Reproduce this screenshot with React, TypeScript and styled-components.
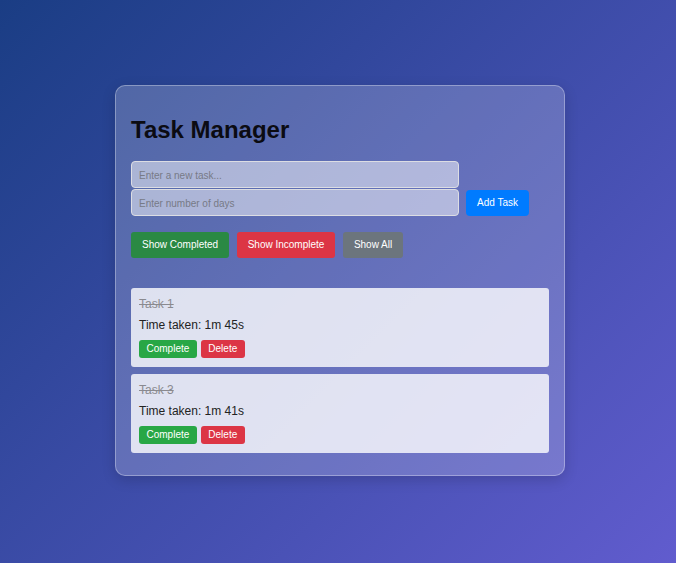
import React from "react";
import styled, { createGlobalStyle } from "styled-components";

const GlobalStyle = createGlobalStyle`
  html, body { margin: 0; padding: 0; }
  body {
    font-family: "Liberation Sans", Arial, sans-serif;
    min-height: 100vh;
    background: linear-gradient(135deg, #1a3d84 0%, #615cce 100%);
    background-attachment: fixed;
  }
  * { box-sizing: border-box; }
`;

const Page = styled.div`
  min-height: 563px;
  display: flex;
  justify-content: center;
  align-items: flex-start;
  padding: 85px 0 0 4px;
`;

const Card = styled.div`
  width: 450px;
  padding: 30px 15px 22px;
  border: 1px solid rgba(255, 255, 255, 0.32);
  border-radius: 10px;
  background: rgba(255, 255, 255, 0.2);
  box-shadow: 0 4px 14px rgba(0, 0, 0, 0.16);
`;

const Title = styled.h2`
  margin: 0 0 17px;
  font-size: 24px;
  line-height: 28px;
  font-weight: bold;
  color: #0b0b12;
`;

const Form = styled.div`
  display: flex;
  align-items: flex-end;
  gap: 7px;
`;

const Inputs = styled.div`
  display: flex;
  flex-direction: column;
  gap: 1px;
  width: 328px;
`;

const Input = styled.input`
  height: 27px;
  width: 100%;
  padding: 2px 7px 0;
  border: 1px solid #dcdde3;
  border-radius: 4px;
  background: rgba(255, 255, 255, 0.5);
  font-family: "Liberation Sans", Arial, sans-serif;
  font-size: 10px;
  color: #222;
  outline: none;
  &::placeholder { color: #777a86; }
`;

const colors: Record<string, string> = {
  blue: "#007bff",
  green: "#2a8944",
  brightGreen: "#28a745",
  red: "#dc3545",
  gray: "#6c757d",
};

const Button = styled.button<{ $tone: string }>`
  height: 26px;
  padding: 0 11px;
  border: none;
  border-radius: 3px;
  background: ${(p) => colors[p.$tone]};
  color: #fff;
  font-family: "Liberation Sans", Arial, sans-serif;
  font-size: 10px;
  line-height: 26px;
  white-space: nowrap;
  cursor: pointer;
`;

const AddButton = styled(Button)`
  border-radius: 4px;
`;

const Filters = styled.div`
  display: flex;
  gap: 7.5px;
  margin-top: 16px;
`;

const TaskList = styled.div`
  display: flex;
  flex-direction: column;
  gap: 7px;
  margin-top: 30px;
`;

const TaskItem = styled.div`
  padding: 9px 8px;
  border-radius: 3px;
  background: rgba(255, 255, 255, 0.8);
`;

const TaskName = styled.div<{ $done: boolean }>`
  font-size: 12px;
  line-height: 14px;
  color: ${(p) => (p.$done ? "#8a8a8f" : "#222")};
  text-decoration: ${(p) => (p.$done ? "line-through" : "none")};
  margin-bottom: 7px;
`;

const TimeText = styled.div`
  font-size: 12px;
  line-height: 14px;
  color: #222;
  margin-bottom: 8px;
`;

const Actions = styled.div`
  display: flex;
  gap: 4px;
`;

const SmallButton = styled(Button)`
  height: 18px;
  line-height: 18px;
  padding: 0 7.5px;
`;

const tasks = [
  { id: 1, name: "Task 1", time: "1m 45s", done: true },
  { id: 3, name: "Task 3", time: "1m 41s", done: true },
];

export default function App() {
  return (
    <>
      <GlobalStyle />
      <Page>
        <Card>
          <Title>Task Manager</Title>
          <Form>
            <Inputs>
              <Input placeholder="Enter a new task..." />
              <Input placeholder="Enter number of days" />
            </Inputs>
            <AddButton $tone="blue">Add Task</AddButton>
          </Form>
          <Filters>
            <Button $tone="green">Show Completed</Button>
            <Button $tone="red">Show Incomplete</Button>
            <Button $tone="gray">Show All</Button>
          </Filters>
          <TaskList>
            {tasks.map((t) => (
              <TaskItem key={t.id}>
                <TaskName $done={t.done}>{t.name}</TaskName>
                <TimeText>Time taken: {t.time}</TimeText>
                <Actions>
                  <SmallButton $tone="brightGreen">Complete</SmallButton>
                  <SmallButton $tone="red">Delete</SmallButton>
                </Actions>
              </TaskItem>
            ))}
          </TaskList>
        </Card>
      </Page>
    </>
  );
}
